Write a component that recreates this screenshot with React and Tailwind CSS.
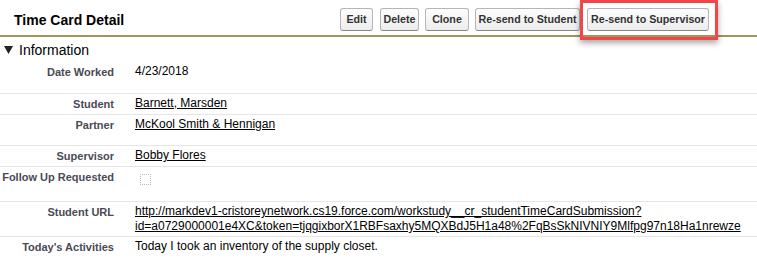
export default function App() {
  const buttons = [
    { label: "Edit", cls: "w-[33px]" },
    { label: "Delete", cls: "w-[39px] ml-[7px]" },
    { label: "Clone", cls: "w-[44px] ml-[6px]" },
    { label: "Re-send to Student", cls: "w-[105px] ml-[6px]" },
    { label: "Re-send to Supervisor", cls: "w-[122px] ml-[7px]" },
  ];

  return (
    <div className="relative w-[757px] h-[263px] overflow-hidden bg-white font-['Liberation_Sans',Arial,sans-serif] text-black">
      {/* HEADER */}
      <div className="flex h-[37px] border-b-2 border-[#9c985c]">
        <h2 className="w-[340px] pl-[14px] pt-[12px] text-[14px] leading-[16px] font-bold">
          Time Card Detail
        </h2>
        <div className="flex pt-[8px]">
          {buttons.map((b) => (
            <button
              key={b.label}
              className={`${b.cls} h-[23px] px-0 rounded-[3px] border border-[#b5b5b5] border-b-[#8a8a8a] bg-gradient-to-b from-[#fdfdfd] to-[#ececec] text-[10.7px] font-bold text-[#333] whitespace-nowrap`}
            >
              {b.label}
            </button>
          ))}
        </div>
      </div>

      {/* highlight */}
      <div className="absolute left-[580px] top-0 w-[138px] h-[40px] border-[3px] border-[#f0464a] shadow-[0_3px_6px_rgba(0,0,0,0.35)]" />

      {/* SECTION */}
      <div className="flex items-center h-[25px] pl-[4px] gap-[6px]">
        <svg width="9" height="8" viewBox="0 0 9 8">
          <polygon points="0,0 9,0 4.5,8" fill="#222" />
        </svg>
        <span className="text-[14px] leading-[16px]">Information</span>
      </div>

      <Row label="Date Worked" h="h-[32px]">4/23/2018</Row>
      <Row label="Student" h="h-[21px]">
        <a className="underline">Barnett, Marsden</a>
      </Row>
      <Row label="Partner" h="h-[31px]">
        <a className="underline">McKool Smith &amp; Hennigan</a>
      </Row>
      <Row label="Supervisor" h="h-[21px]">
        <a className="underline">Bobby Flores</a>
      </Row>
      <Row label="Follow Up Requested" h="h-[35px]">
        <div className="mt-[5px] ml-[5px] w-[11px] h-[11px] border border-dotted border-[#bdbdbd]" />
      </Row>
      <Row label="Student URL" h="h-[35px]">
        <a className="underline">
          http://markdev1-cristoreynetwork.cs19.force.com/workstudy__cr_studentTimeCardSubmission?
          <br />
          id=a0729000001e4XC&amp;token=tjqgixborX1RBFsaxhy5MQXBdJ5H1a48%2FqBsSkNIVNIY9Mlfpg97n18Ha1nrewze
        </a>
      </Row>
      <Row label="Today's Activities" h="h-[30px]" last>
        Today I took an inventory of the supply closet.
      </Row>
    </div>
  );
}

function Row({ label, h, children, last }) {
  return (
    <div className={`flex ${h} ${last ? "" : "border-b border-[#e6e6e6]"}`}>
      <div className="w-[124px] pr-[10px] pt-[3px] text-right text-[11px] leading-[14px] font-bold text-[#4a4a56] whitespace-nowrap">
        {label}
      </div>
      <div className="pl-[11px] pt-[2px] text-[12px] leading-[15px]">{children}</div>
    </div>
  );
}
